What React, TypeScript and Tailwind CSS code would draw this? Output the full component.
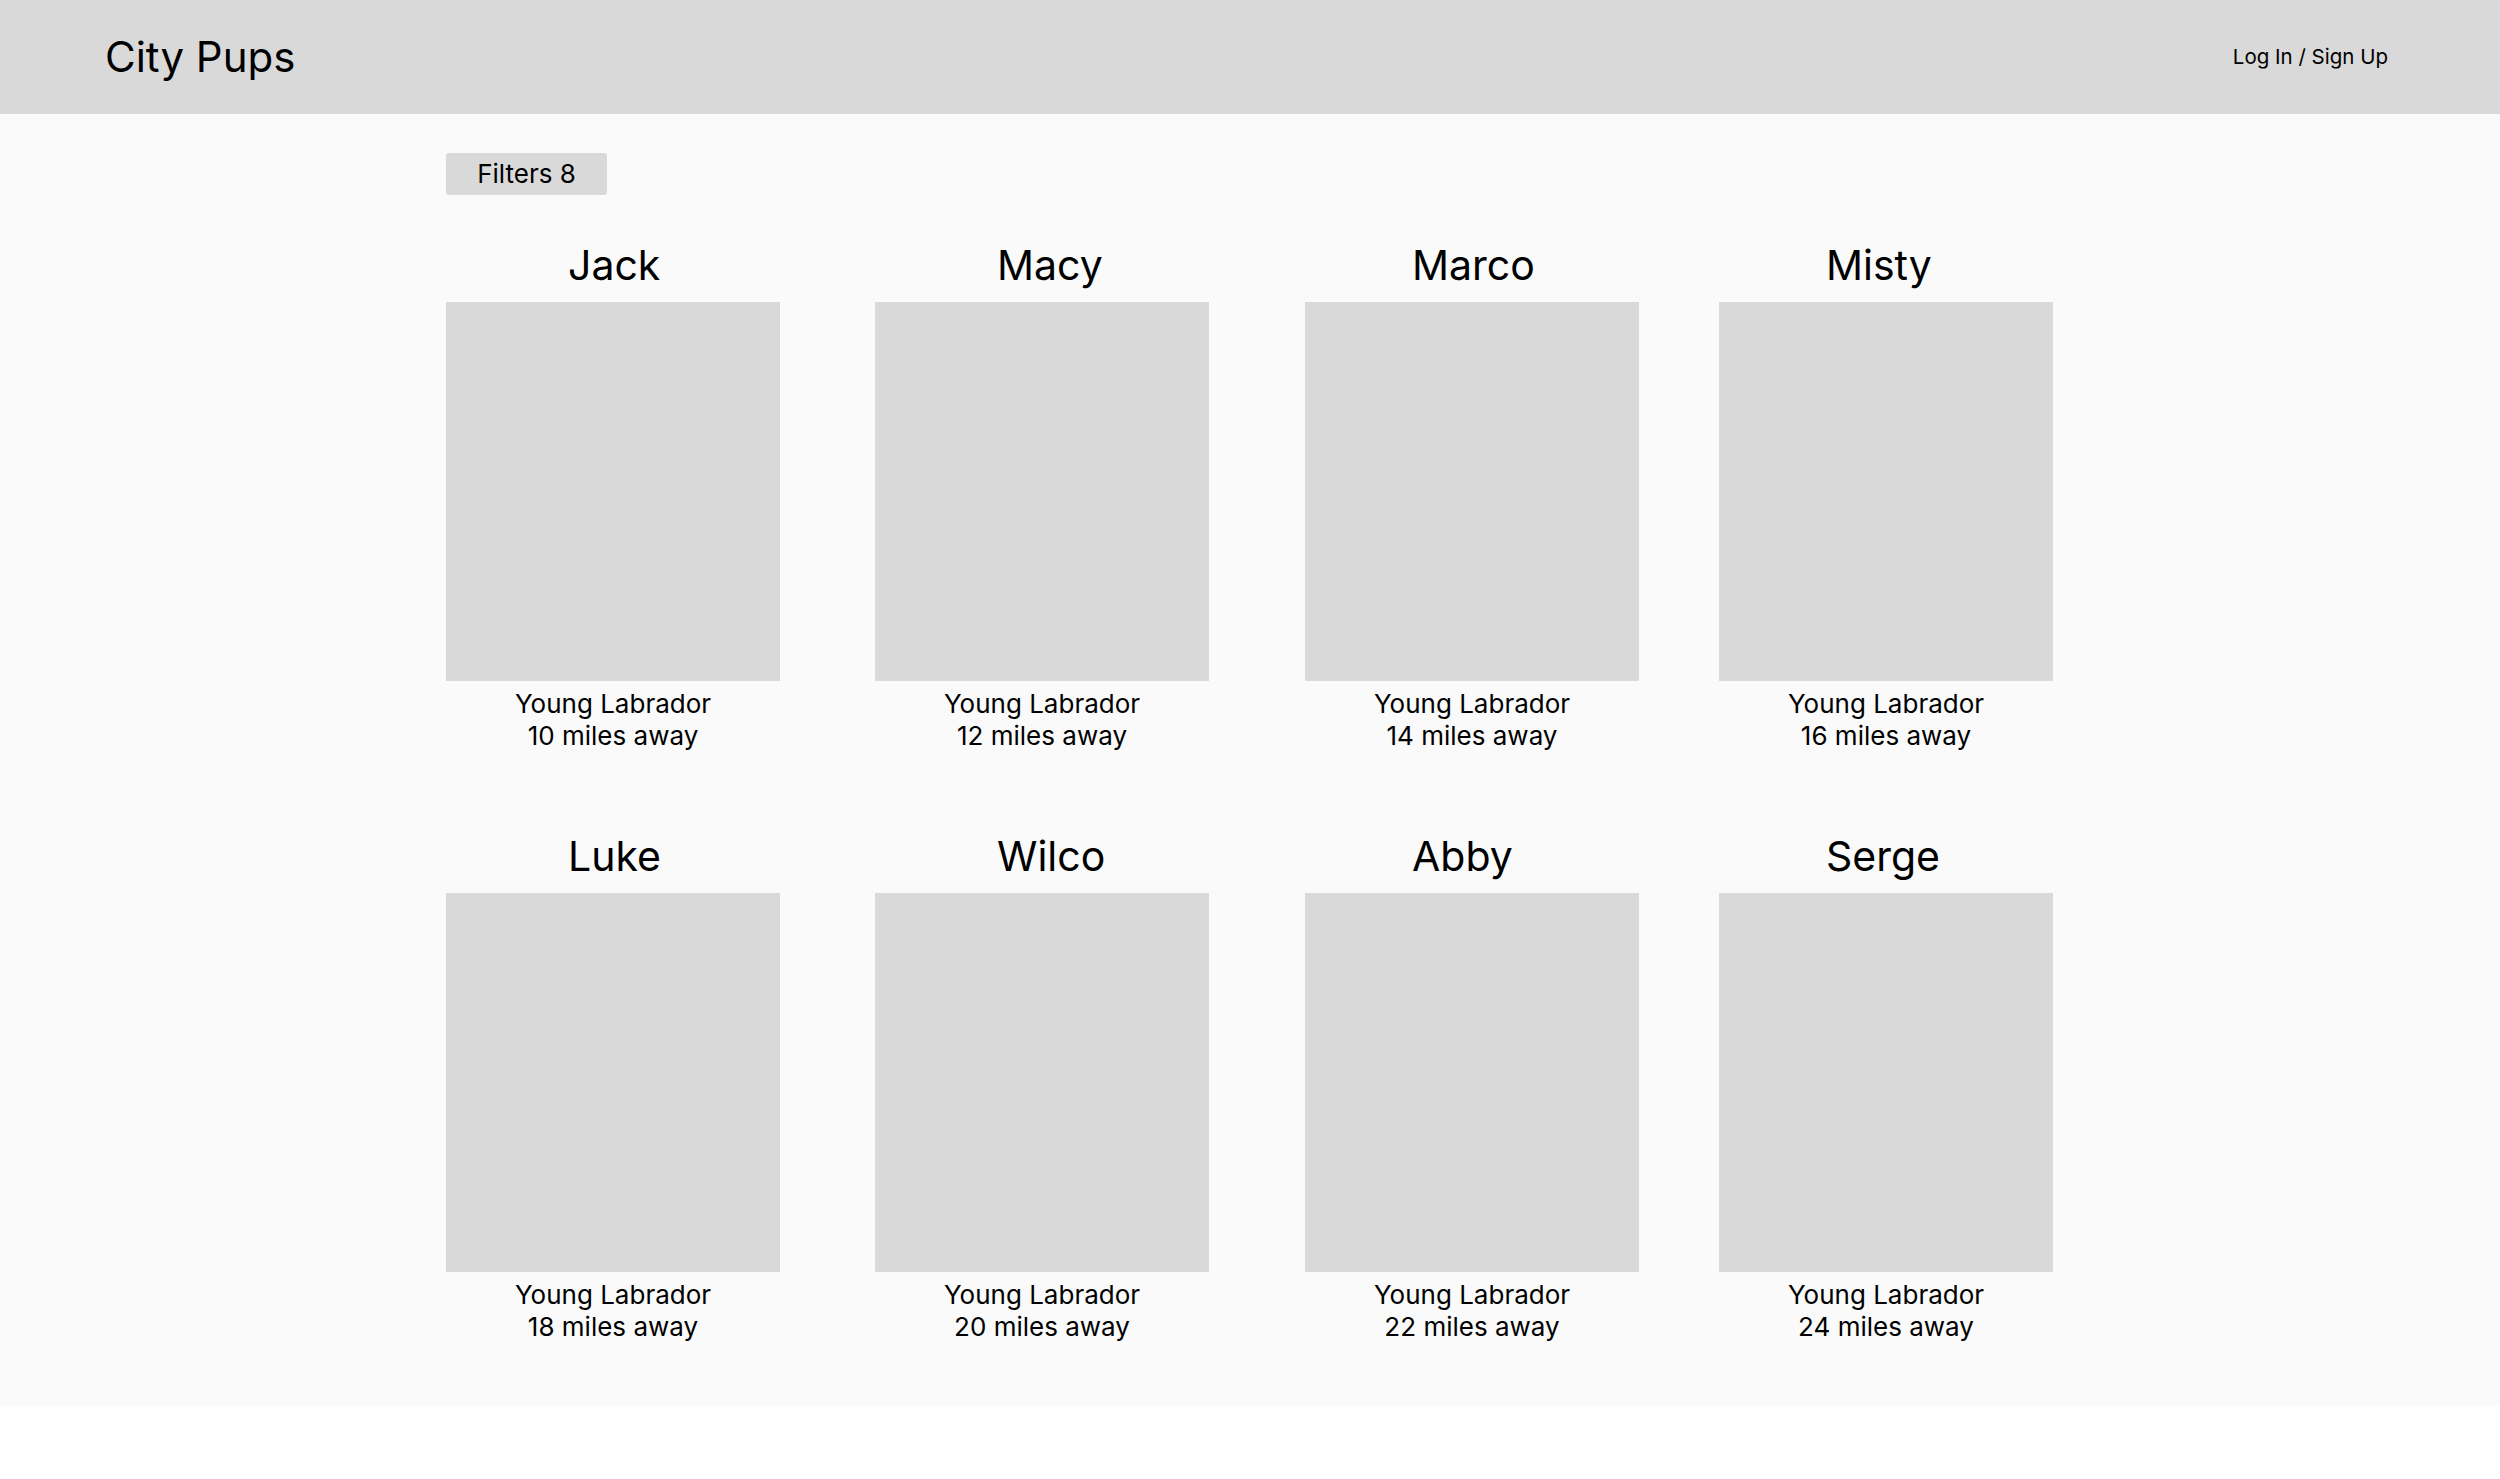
const pups = [
  { name: 'Jack', miles: 10 },
  { name: 'Macy', miles: 12 },
  { name: 'Marco', miles: 14 },
  { name: 'Misty', miles: 16 },
  { name: 'Luke', miles: 18 },
  { name: 'Wilco', miles: 20 },
  { name: 'Abby', miles: 22 },
  { name: 'Serge', miles: 24 },
]

// column spacing and name indent per column, as in the mockup
const colMargin = ['ml-0', 'ml-[95px]', 'ml-[96px]', 'ml-[80px]']
const nameIndent = ['pl-[122px]', 'pl-[122px]', 'pl-[107px]', 'pl-[107px]']

function PupCard({ name, miles, col }: { name: string; miles: number; col: number }) {
  return (
    <div className={`flex w-[334px] flex-col ${colMargin[col]}`}>
      <h2 className={`h-[50px] text-[41px] leading-[50px] font-normal text-black ${nameIndent[col]}`}>{name}</h2>
      <div className="mt-3 h-[379px] w-full bg-[#d9d9d9]" />
      <div className="mt-[7px] text-center text-[26px] leading-[32px] text-black">
        <p>Young Labrador</p>
        <p>{miles} miles away</p>
      </div>
    </div>
  )
}

export default function App() {
  const rows = [pups.slice(0, 4), pups.slice(4, 8)]

  return (
    <div className="min-h-screen bg-white font-['Inter','Noto_Sans',sans-serif] text-black">
      <header className="flex h-[114px] items-center justify-between bg-[#d9d9d9] pl-[105px] pr-[112px]">
        <h1 className="text-[42px] leading-none font-normal">City Pups</h1>
        <button className="text-[20.5px] leading-none">Log In / Sign Up</button>
      </header>

      <main className="bg-[#fafafa] pb-[63px] pl-[446px] pt-[39px]">
        <button className="flex h-[42px] w-[161px] items-center justify-center rounded-[3px] bg-[#d9d9d9] text-[26px] leading-none">
          Filters 8
        </button>

        <div className="mt-[45px] flex flex-col gap-[79px]">
          {rows.map((row, i) => (
            <div key={i} className="flex">
              {row.map((p, j) => (
                <PupCard key={p.name} name={p.name} miles={p.miles} col={j} />
              ))}
            </div>
          ))}
        </div>
      </main>
    </div>
  )
}
